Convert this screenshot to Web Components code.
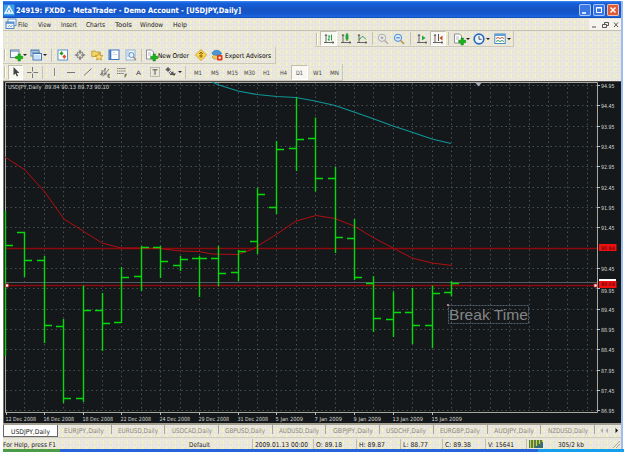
<!DOCTYPE html>
<html lang="en">
<head>
<meta charset="utf-8">
<title>MetaTrader</title>
<style>
  body { margin: 0; background: #fff; font-family: "DejaVu Sans Condensed", "DejaVu Sans", sans-serif; overflow: hidden; }
</style>
</head>
<body>
<mt-window></mt-window>

<script>
// One line of text squeezed to a given width
class UiLabel extends HTMLElement {
  connectedCallback() {
    const w = +this.getAttribute("w");
    const size = this.getAttribute("size") || 6.6;
    const weight = this.getAttribute("weight") || 400;
    this.attachShadow({ mode: "open" });
    this.shadowRoot.innerHTML = `
      <style>
        :host { display: block; flex: none; width: ${w}px; height: 10px; }
        svg { display: block; overflow: visible; }
        text { font-family: "DejaVu Sans Condensed", "DejaVu Sans", sans-serif; }
      </style>
      <svg width="${w}" height="10"><text x="0" y="7.6" font-size="${size}" font-weight="${weight}"
        fill="currentColor" textLength="${w}" lengthAdjust="spacingAndGlyphs">${this.getAttribute("text")}</text></svg>
    `;
  }
}
customElements.define("ui-label", UiLabel);

const PLUS = `<path d="M8 5h2.4v2.300h2.300v2.400h-2.300v2.300H8V9.700H5.700V7.300H8z" fill="#18b818" stroke="#087808" stroke-width=".5"/>`;
const AXES = `<path d="M3 1.500V10M1 9.500h10M2 3l1-1.500L4 3M9.500 8.500l1.500 1-1.500 1" stroke="#555" fill="none" stroke-width=".9"/>`;

const ICONS = {
  logo: `<rect x=".5" y=".5" width="11" height="11" fill="#3fa0e8"/><path d="M6 2l4 7H2z" fill="none" stroke="#fff" stroke-width="1.300"/><path d="M6 5l1.500 3h-3z" fill="#fff"/>`,
  doc: `<rect x="3" y="1" width="8" height="6.500" fill="#fff" stroke="#5b93d0"/><rect x="1" y="4" width="8" height="6.500" fill="#eaf4ff" stroke="#4a86c8"/><path d="M1 5h8" stroke="#4a86c8" stroke-width="1.500"/><path d="M3 9l1.500-1.500L6 9l1.500-2" stroke="#888" fill="none" stroke-width=".7"/>`,
  newchart: `<rect x=".5" y="1" width="8.500" height="7.500" fill="#f4f8fc" stroke="#6685a0"/><path d="M1 2h8" stroke="#8aa8c8" stroke-width="1.500"/>${PLUS}`,
  profiles: `<rect x="1" y="1" width="8" height="6" fill="#fff" stroke="#5585bb"/><path d="M1 1.800h8M2 3.800h8" stroke="#5585bb" stroke-width="1.200"/><rect x="3" y="4.500" width="8.500" height="6.500" fill="#f0f7ff" stroke="#4476b0"/><path d="M4 7h6.500M4 9h6.500" stroke="#a7c7e8"/>`,
  market: `<rect x="1" y="1" width="9.500" height="10" fill="#fff" stroke="#5e94c8"/><path d="M2.500 4.500l2-2.500 2 2.500-2 2z" fill="#20a020"/><path d="M5.300 7.500l2-2 2 2-2 2.500z" fill="#e05020"/>`,
  cross: `<circle cx="6" cy="6" r="3.300" fill="none" stroke="#777"/><path d="M6 .8V5M6 7v4.200M.8 6H5M7 6h4.200" stroke="#666"/>`,
  navigator: `<path d="M.8 2h3.500l1 1h4v4.500H.8z" fill="#f4d468" stroke="#b08820" stroke-width=".7"/><path d="M8 4l1.200 2.500 2.600.2-2 1.800.6 2.600L8 9.800l-2.400 1.300.6-2.600-2-1.800 2.600-.2z" fill="#ffe070" stroke="#b08820" stroke-width=".7"/>`,
  terminal: `<rect x="1" y="1" width="10" height="9.500" fill="#fff" stroke="#3f78be"/><path d="M2.300 1v9.500" stroke="#3f78be" stroke-width="2"/><path d="M5 3.500h2M5 5.500h4" stroke="#b0c8e0" stroke-width=".7"/>`,
  tester: `<rect x="1" y="1" width="9" height="10" fill="#eef4fb" stroke="#94b4d6"/><path d="M3 2v6M5 3v4" stroke="#98b8d8"/><circle cx="6.500" cy="6" r="2.500" fill="#e4f2ff" stroke="#6695c5"/><path d="M8.300 8l2.700 3" stroke="#a88a58" stroke-width="1.200"/>`,
  order: `<path d="M1.500 1h5l2 2v7h-7z" fill="#fff" stroke="#778" stroke-width=".8"/><path d="M3 4h3M3 6h3" stroke="#99a" stroke-width=".7"/>${PLUS}`,
  meta: `<path d="M6 .5L11.500 6 6 11.500.5 6z" fill="#ffd850" stroke="#c09018" stroke-width=".8"/><path d="M6 3v6M4 5l2-2 2 2M4 7h4" stroke="#806010" fill="none" stroke-width=".9"/>`,
  expert: `<path d="M1 8l5-5 4 3-2 4H3z" fill="#f0ca55" stroke="#b08828" stroke-width=".6"/><path d="M1 5c0-5 9-5 9.500 0L5.500 6.500z" fill="#4c96d8" stroke="#2d70b0" stroke-width=".6"/><rect x="6" y="6" width="5.500" height="5.500" rx="1" fill="#e03820"/><rect x="7.700" y="7.700" width="2" height="2" fill="#fff"/>`,
  bars: `${AXES}<path d="M6 2v6M4.800 6.500H6M6 3.500h1.200M8.500 1.500v6" stroke="#20a040" fill="none"/>`,
  candles: `${AXES}<path d="M7 0v8" stroke="#108030"/><rect x="5.600" y="1.500" width="2.800" height="5" fill="#18a838"/>`,
  line: `${AXES}<path d="M3 7l3-3.500 1.500.3L10 6.500" stroke="#38a050" fill="none"/>`,
  zoomin: `<circle cx="5" cy="4.800" r="3.600" fill="#eee" stroke="#aaa"/><path d="M3.500 4.800h3M5 3.300v3" stroke="#999"/><path d="M7.600 7.500l3.400 3.300" stroke="#b9b5a6" stroke-width="1.700"/>`,
  zoomout: `<circle cx="5" cy="4.800" r="3.600" fill="#d8ecff" stroke="#4888d0"/><path d="M3.200 4.800h3.600" stroke="#3070b0"/><path d="M7.600 7.500l3.400 3.300" stroke="#b89a50" stroke-width="1.700"/>`,
  scroll: `${AXES}<path d="M6 2.500L9.500 5 6 7.500z" fill="#28a848"/>`,
  shift: `${AXES}<path d="M6.500 1v7" stroke="#555"/><path d="M10.500 2.500v5L7.500 5z" fill="#c84828"/>`,
  clock: `<circle cx="6" cy="6" r="4.800" fill="#eaf5ff" stroke="#2868c0" stroke-width="1.700"/><path d="M6 3v3.300h2.500" stroke="#444" fill="none" stroke-width=".9"/>`,
  template: `<rect x=".8" y="1" width="10.400" height="9.500" fill="#fff" stroke="#4d88bb"/><path d="M1 2h10" stroke="#60a0d8" stroke-width="2"/><path d="M2 5.500l2-1 2 1 2-1 2 1" stroke="#b55c38" fill="none"/><path d="M2 8.500l2-1 2 1 2-1 2 1" stroke="#38985a" fill="none"/>`,
  cursor: `<path d="M3.500 1v8.200l2-1.800 1.300 3 1.300-.6L6.800 7h2.600z" fill="#444"/>`,
  crosshair: `<path d="M6.500 1v4.500M6.500 7.500V12M1 6.500h4.500M7.500 6.500H12" stroke="#777"/>`,
  vline: `<path d="M6.500 2v8" stroke="#888"/>`,
  hline: `<path d="M2 6.500h8" stroke="#777"/>`,
  trend: `<path d="M2 9.500L9.500 2.500" stroke="#777"/>`,
  channel: `<path d="M1 9l6-7M4 10.500l6-7.500M3 4v6M6 2v6M2 8h6" stroke="#666" fill="none" stroke-width=".8"/><path d="M11 8.300H9v3h2M9 9.800h1.600" stroke="#444" fill="none" stroke-width=".7"/>`,
  fibo: `<path d="M1 2.500h9M1 5h9M1 7.500h7" stroke="#777" stroke-dasharray="1.500 .6"/><path d="M11 8.300H9v3.200M9 9.800h1.600" stroke="#444" fill="none" stroke-width=".7"/>`,
  label: `<rect x="1.500" y="1.500" width="9" height="9" fill="none" stroke="#888" stroke-dasharray="1 1"/><path d="M3.500 3.800h5M6 3.800v5" stroke="#555"/>`,
  arrows: `<path d="M1 3.500l2-2 2 2-2 2zM5 5l3 3M8 5.500v3H5M4 6l2 3" fill="#555" stroke="#555" stroke-width=".9"/><path d="M7 7.500h4L9 10z" fill="#444"/>`
};

class MtIcon extends HTMLElement {
  connectedCallback() {
    this.attachShadow({ mode: "open" });
    this.shadowRoot.innerHTML = `
      <style>
        :host { display: block; flex: none; width: 12px; height: 12px; }
        svg { display: block; overflow: visible; }
      </style>
      <svg width="12" height="12" viewBox="0 0 12 12">${ICONS[this.getAttribute("name")]}</svg>
    `;
  }
}
customElements.define("mt-icon", MtIcon);

// Toolbar button: icon or text in the slot, optional drop arrow and pressed state
class ToolButton extends HTMLElement {
  connectedCallback() {
    this.attachShadow({ mode: "open" });
    this.shadowRoot.innerHTML = `
      <style>
        :host {
          display: flex; flex: none; align-items: center; justify-content: center;
          gap: 1px; box-sizing: border-box; height: 15px; color: #444;
        }
        :host([pressed]) { background: #f8f7f2; border: 1px solid; border-color: #c3bfae #fff #fff #c3bfae; }
        i { display: none; border: 2px solid transparent; border-top-color: #222; border-bottom: 0; }
        :host([drop]) i { display: block; }
      </style>
      <slot></slot><i></i>
    `;
    this.style.width = this.getAttribute("w") + "px";
  }
}
customElements.define("tool-button", ToolButton);

class ToolBar extends HTMLElement {
  connectedCallback() {
    this.attachShadow({ mode: "open" });
    this.shadowRoot.innerHTML = `
      <style>
        :host {
          display: flex; align-items: center; box-sizing: border-box; height: 100%;
          border-right: 1px solid #c9c5b4; border-bottom: 1px solid #cdc9b9;
        }
        .grip { flex: none; width: 0; height: 12px; margin: 0 2px 0 1px; border-left: 1px solid #c0bcac; border-right: 1px solid #fff; }
        ::slotted(hr) { flex: none; width: 1px; height: 13px; margin: 0 2px; border: 0; background: #c6c2b2; }
      </style>
      <div class="grip"></div><slot></slot>
    `;
  }
}
customElements.define("tool-bar", ToolBar);

class TitleBar extends HTMLElement {
  connectedCallback() {
    this.attachShadow({ mode: "open" });
    this.shadowRoot.innerHTML = `
      <style>
        :host {
          display: flex; align-items: center; box-sizing: border-box; height: 17px; padding: 0 2px 0 0; color: #fff;
          background: linear-gradient(#3d8bf0, #1660dc 12%, #1553c4 45%, #1558cc 75%, #1b66e0 92%, #1245a8);
        }
        mt-icon { margin: 0 1px 0 0; }
        ui-label { margin-right: auto; }
        .btn { width: 12px; height: 12px; margin-left: 2px; border-radius: 2px; box-shadow: inset 0 0 0 1px #a8c6f8; background: #3a75e4; }
        .close { background: #df5a34; box-shadow: inset 0 0 0 1px #f4c2b4; }
        svg { display: block; fill: none; stroke: #fff; }
      </style>
      <mt-icon name="logo"></mt-icon>
      <ui-label w="225" size="7.600" weight="700" text="24919: FXDD - MetaTrader - Demo Account - [USDJPY,Daily]"></ui-label>
      <div class="btn"><svg width="12" height="12"><path d="M3 9h4" stroke-width="1.600"/></svg></div>
      <div class="btn"><svg width="12" height="12"><path d="M3.500 3.500h5v5h-5zM3 4h6"/></svg></div>
      <div class="btn close"><svg width="12" height="12"><path d="M3.500 3.500l5 5M8.500 3.500l-5 5" stroke-width="1.500"/></svg></div>
    `;
  }
}
customElements.define("title-bar", TitleBar);

class MenuBar extends HTMLElement {
  connectedCallback() {
    const items = [["File", 10, 10], ["View", 13, 10], ["Insert", 16, 9], ["Charts", 19, 10],
      ["Tools", 17, 8], ["Window", 23, 10], ["Help", 14, 0]];
    this.attachShadow({ mode: "open" });
    this.shadowRoot.innerHTML = `
      <style>
        :host { display: flex; align-items: center; height: 12px; padding-left: 2px; color: #222; border-bottom: 1px solid #c5c1b0; }
        mt-icon { margin-right: 1px; }
        .mdi { display: block; margin-left: auto; }
      </style>
      <mt-icon name="doc"></mt-icon>
      ${items.map(([t, w, gap]) => `<ui-label w="${w}" text="${t}" style="margin-right:${gap}px"></ui-label>`).join("")}
      <svg class="mdi" width="32" height="11" fill="none" stroke="#555">
        <path d="M0 0h32v11H0z" fill="#f5f3ec" stroke="none"/>
        <path d="M3 8h4M13.500 5.500h4v3h-4zM15.500 5V3.500h4v3H18M25 3.500l4 4.500M29 3.500L25 8"/>
      </svg>
    `;
  }
}
customElements.define("menu-bar", MenuBar);

// Price chart: OHLC bars, two averages, levels and both axes
const BARS = [
  [211, 356, null, 245], [232, 277, 232.5, 260], [256, 343, 260.5, 325.5], [319, 403, 326, 398.5],
  [285.5, 402, 398.5, 310], [293, 351, 310, 323], [267, 323, 322, 277], [246, 291, 276.5, 247],
  [246, 278, 247.5, 261], [256, 271, 265.5, 259.5], [256, 297, 258, 258.5], [246, 286, 258.5, 273],
  [250, 281, 272.5, 251.5], [188, 254, 241.5, 194.5], [141, 214, 207.5, 149.5], [97.5, 171, 148.5, 139.5],
  [117.5, 191.5, 138.5, 178.5], [167, 253, 178.5, 237.5], [219, 280, 238.5, 277.5], [276, 332, 283.5, 318],
  [291.5, 337, 319.5, 312], [288, 344, 312.5, 325], [285.5, 348, 325, 293.5], [281, 296.5, 292.5, 283]
];
const FAST = "5,157 25,170 44,191 64,219 83,231 102,243 121,248 141,248 160,248.500 180,251 199,251.500 212,254 238,254.500 252,249.500 277,234 296,221 316,215.500 335,218.500 354,226 374,238 393,248 412,258 432,263 452,265.500";
const SLOW = "212,82 219,85 238,91 257,94.500 277,96.500 296,97.500 315,101 335,105.500 354,112 374,119 393,126 410,131.500 432,139 451,143.500";
const DATES = ["12 Dec 2008", "16 Dec 2008", "18 Dec 2008", "22 Dec 2008", "24 Dec 2008", "29 Dec 2008",
  "31 Dec 2008", "5 Jan 2009", "7 Jan 2009", "9 Jan 2009", "13 Jan 2009", "15 Jan 2009"];

class PriceChart extends HTMLElement {
  connectedCallback() {
    const barX = i => 5.5 + Math.round(i * 19.39);
    const rowY = i => Math.round(85 + i * 20.33) + 0.5;
    let grid = "", prices = "", bars = "", dates = "";

    for (let i = 1; i <= 30; i++) grid += `M${barX(i)} 83V411`;
    for (let i = 0; i <= 16; i++) {
      grid += `M6 ${rowY(i)}H597`;
      if (i === 8) continue; // covered by the 90.94 level tag
      // the row under the 90.04 tag is pushed down to stay readable
      const drop = i === 10 ? 4 : 2;
      prices += `<path d="M597 ${rowY(i)}h3" stroke="#bbb"/><text x="601" y="${rowY(i) + drop}" textLength="13.5" lengthAdjust="spacingAndGlyphs">${(94.95 - i * 0.5).toFixed(2)}</text>`;
    }
    BARS.forEach(([high, low, open, close], i) => {
      const x = barX(i);
      bars += `M${x} ${high}V${low}M${x} ${Math.floor(close) + 0.5}h7.5`;
      if (open) bars += `M${x} ${Math.floor(open) + 0.5}h-7.5`;
    });
    DATES.forEach((d, i) => {
      const x = barX(i * 2) + (i ? -1 : 0);
      dates += `<path d="M${x + 1} 412v3" stroke="#bbb"/><text x="${x}" y="420.800" textLength="${d.length > 10 ? 30.5 : 27.5}" lengthAdjust="spacingAndGlyphs">${d}</text>`;
    });

    this.attachShadow({ mode: "open" });
    this.shadowRoot.innerHTML = `
      <style>
        :host { display: block; height: 342px; }
        svg { display: block; background: #14181b; }
        text { font: 5.6px "DejaVu Sans Condensed", "DejaVu Sans", sans-serif; fill: #d8d8d2; }
        text.note { font: 14.5px "Liberation Sans", Arial, sans-serif; fill: #858585; }
        text.tag { font-size: 5px; fill: #300; }
      </style>
      <svg width="618" height="342" viewBox="3 81 618 342" fill="none">
        <path d="M3 81.500h618" stroke="#514b4d"/>
        <path d="M3.500 81v342" stroke="#77736c"/>
        <path d="${grid}" stroke="#465156" stroke-dasharray="1.500 3"/>
        <path d="M5.500 412V82.500H597.500V412.500H5" stroke="#aaa79f"/>
        <path d="M475.500 83h6l-3 3.500z" fill="#aab"/>
        <path d="M5 248.500h592M5 285.500h592" stroke="#8d090d" stroke-width="1.300"/>
        <path d="M5 282.500h592" stroke="#525c64"/>
        <polyline points="${SLOW}" stroke="#109698" stroke-width="1.200"/>
        <polyline points="${FAST}" stroke="#b40d10"/>
        <path d="${bars}" stroke="#06d80a" stroke-width="1.400"/>
        ${prices}${dates}
        <rect x="599" y="279" width="17" height="4" fill="#fff"/>
        <rect x="599" y="244" width="17.500" height="7" fill="#f01010"/>
        <rect x="599" y="281" width="17.500" height="7" fill="#f01010"/>
        <text class="tag" x="601" y="249.500" textLength="13.500">90.94</text>
        <text class="tag" x="601" y="286" textLength="13.500">90.04</text>
        <path d="M5.500 284h3v3h-3zM594 284h3v3h-3z" fill="#fff" stroke="#d02020" stroke-width=".8"/>
        <text x="8" y="89" textLength="101" lengthAdjust="spacingAndGlyphs" xml:space="preserve">USDJPY,Daily&#160; 89.84 90.13 89.73 90.10</text>
        <rect x="448.500" y="305.500" width="80" height="18" stroke="#546575" stroke-dasharray="2 1"/>
        <rect x="447" y="304" width="2" height="2" fill="#b08080"/>
        <text class="note" x="449" y="319.800" textLength="79" lengthAdjust="spacingAndGlyphs">Break Time</text>
      </svg>
    `;
  }
}
customElements.define("price-chart", PriceChart);

class ChartTabs extends HTMLElement {
  connectedCallback() {
    const tabs = ["EURJPY", "EURUSD", "USDCAD", "GBPUSD", "AUDUSD", "GBPJPY", "USDCHF", "EURGBP", "AUDJPY", "NZDUSD"];
    this.attachShadow({ mode: "open" });
    this.shadowRoot.innerHTML = `
      <style>
        :host { display: flex; box-sizing: border-box; height: 14px; border-top: 2px solid #a29f92; color: #8c897e; }
        .tab { display: flex; flex: none; align-items: center; justify-content: center; width: 53.700px; height: 9px; box-sizing: border-box; border-right: 1px solid #aaa798; }
        .on { width: 55px; height: 12px; background: #fff; color: #222; border: 1px solid #666; border-top: 0; }
        svg { margin: 1px 2px 0 auto; }
      </style>
      <div class="tab on"><ui-label w="39" text="USDJPY,Daily"></ui-label></div>
      ${tabs.map(t => `<div class="tab"><ui-label w="40" text="${t},Daily"></ui-label></div>`).join("")}
      <svg width="20" height="9"><path d="M4 2v5L1.500 4.500zM9 2v5L6.500 4.500z" fill="#aaa"/><path d="M16.500 2v5L19 4.500z" fill="#111"/></svg>
    `;
  }
}
customElements.define("chart-tabs", ChartTabs);

class StatusBar extends HTMLElement {
  connectedCallback() {
    const cells = [["2009.01.13 00:00", 61, 53], ["O: 89.18", 43, 26], ["H: 89.87", 44, 26],
      ["L: 88.77", 42, 25], ["C: 89.38", 43, 26], ["V: 15641", 41, 26]];
    this.attachShadow({ mode: "open" });
    this.shadowRoot.innerHTML = `
      <style>
        :host { display: flex; align-items: center; height: 11px; border-top: 1px solid #d0cdbf; color: #222; }
        .help { width: 186px; }
        .mode { width: 63px; }
        .cell { display: flex; flex: none; align-items: center; box-sizing: border-box; height: 10px; border-left: 1px solid #c0bcac; padding-left: 2px; }
        .mode, .help { border-left: 0; padding-left: 0; }
        .traffic { width: 32px; }
        .resize { margin: 1px 1px 0 auto; }
      </style>
      <div class="cell help"><ui-label w="53" text="For Help, press F1"></ui-label></div>
      <div class="cell mode"><ui-label w="21" text="Default"></ui-label></div>
      ${cells.map(([t, w, tw]) => `<div class="cell" style="width:${w}px"><ui-label w="${tw}" text="${t}"></ui-label></div>`).join("")}
      <div class="cell traffic"><svg width="14" height="8">
        <rect width="14" height="8" fill="#4c7040"/>
        <path d="M1.500 0v8M4.500 0v8M7.500 0v6M10.500 0v4M13.500 0v2" stroke="#c3d052" stroke-width="1.300"/>
        <path d="M7.500 6v2M10.500 4v4M13.500 2v6" stroke="#2f67a8" stroke-width="1.500"/>
      </svg></div>
      <ui-label w="26" text="305/2 kb"></ui-label>
      <svg class="resize" width="8" height="8"><path d="M1 8l7-7M4 8l4-4" stroke="#a9a595"/></svg>
    `;
  }
}
customElements.define("status-bar", StatusBar);

class MtWindow extends HTMLElement {
  connectedCallback() {
    const icon = (name, w, extra = "") => `<tool-button w="${w}" ${extra}><mt-icon name="${name}"></mt-icon></tool-button>`;
    const frame = (t, tw, w, extra = "") => `<tool-button w="${w}" ${extra}><ui-label w="${tw}" size="6" text="${t}"></ui-label></tool-button>`;
    this.attachShadow({ mode: "open" });
    this.shadowRoot.innerHTML = `
      <style>
        :host { display: flex; flex-direction: column; width: 625px; height: 452px; box-sizing: border-box; padding-top: 1px; }
        .frame {
          width: 618px; margin-left: 3px; border-right: 2px solid #9dbdf0;
          background-color: #e8e5da;
          background-image: radial-gradient(circle, #f8f5b0 .7px, transparent .8px), radial-gradient(circle, #f2f0ea .7px, transparent .8px);
          background-size: 8px 6px, 3px 3px;
        }
        .row { display: flex; height: 17px; }
        .row.top { height: 16px; padding-left: 312px; }
        .task { width: 621px; height: 4px; margin-left: 3px; background: linear-gradient(90deg, #4b9b48 57px, #2764da 57px 535px, #159eeb 535px); }
      </style>
      <div class="frame">
        <title-bar></title-bar>
        <menu-bar></menu-bar>
        <div class="row top">
          <tool-bar>
            ${icon("bars", 17, "pressed")}${icon("candles", 17)}${icon("line", 16)}<hr>
            ${icon("zoomin", 15)}${icon("zoomout", 18)}<hr>
            ${icon("scroll", 17)}${icon("shift", 16, "pressed")}<hr>
            ${icon("order", 20, "drop")}${icon("clock", 21, "drop")}${icon("template", 21, "drop")}
          </tool-bar>
        </div>
        <div class="row">
          <tool-bar>
            ${icon("newchart", 20, "drop")}${icon("profiles", 21, "drop")}<hr>
            ${icon("market", 17)}${icon("cross", 17)}${icon("navigator", 17)}${icon("terminal", 17)}${icon("tester", 17)}<hr>
            ${icon("order", 14)}<ui-label w="31" text="New Order" style="margin-right:5px"></ui-label>
            ${icon("meta", 14)}${icon("expert", 17)}<ui-label w="46" text="Expert Advisors" style="margin-right:4px"></ui-label>
          </tool-bar>
        </div>
        <div class="row">
          <tool-bar>
            ${icon("cursor", 15, "pressed")}${icon("crosshair", 17)}<hr>
            ${icon("vline", 17)}${icon("hline", 17)}${icon("trend", 17)}${icon("channel", 17)}${icon("fibo", 17)}
            ${frame("A", 5, 16)}${icon("label", 17)}${icon("arrows", 20, "drop")}<hr>
            ${frame("M1", 8, 19)}${frame("M5", 8, 16)}${frame("M15", 11, 18)}${frame("M30", 11, 17)}${frame("H1", 7, 17)}
            ${frame("H4", 7, 16)}${frame("D1", 7, 17, "pressed")}${frame("W1", 9, 18)}${frame("MN", 9, 16)}
          </tool-bar>
        </div>
        <price-chart></price-chart>
        <chart-tabs></chart-tabs>
        <status-bar></status-bar>
      </div>
      <div class="task"></div>
    `;
  }
}
customElements.define("mt-window", MtWindow);
</script>
</body>
</html>
